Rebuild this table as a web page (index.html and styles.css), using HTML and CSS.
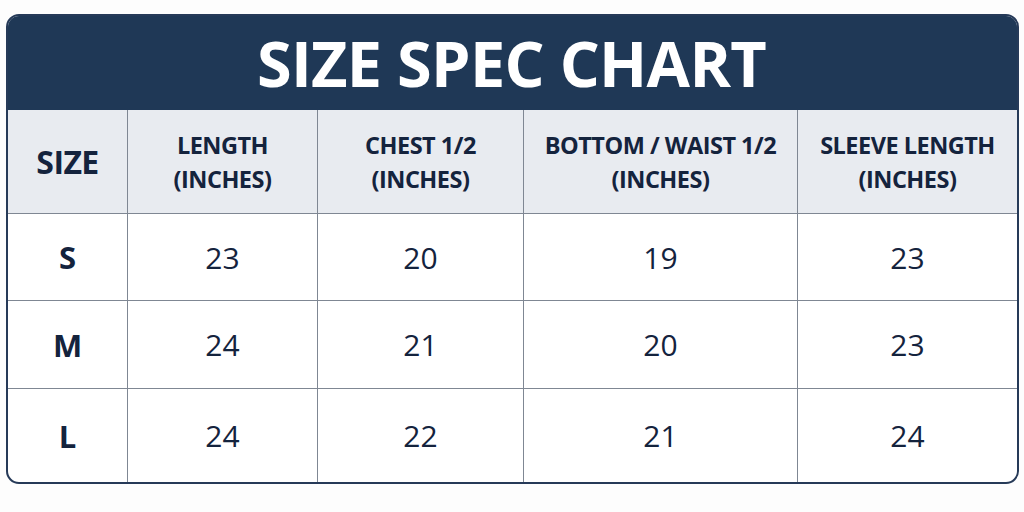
FILE: index.html
```html
<!DOCTYPE html>
<html>
<head>
<meta charset="utf-8">
<link rel="stylesheet" href="styles.css">
</head>
<body>
<div class="card">
  <div class="title">SIZE SPEC CHART</div>
  <div class="grid">
    <div class="cell head size">SIZE</div>
    <div class="cell head">LENGTH<br>(INCHES)</div>
    <div class="cell head">CHEST 1/2<br>(INCHES)</div>
    <div class="cell head">BOTTOM / WAIST 1/2<br>(INCHES)</div>
    <div class="cell head last">SLEEVE LENGTH<br>(INCHES)</div>

    <div class="cell label">S</div>
    <div class="cell num">23</div>
    <div class="cell num">20</div>
    <div class="cell num">19</div>
    <div class="cell num last">23</div>

    <div class="cell label">M</div>
    <div class="cell num">24</div>
    <div class="cell num">21</div>
    <div class="cell num">20</div>
    <div class="cell num last">23</div>

    <div class="cell label bottom">L</div>
    <div class="cell num bottom">24</div>
    <div class="cell num bottom">22</div>
    <div class="cell num bottom">21</div>
    <div class="cell num last bottom">24</div>
  </div>
</div>
</body>
</html>
```

FILE: styles.css
```css
html, body {
  margin: 0;
  padding: 0;
  background: #fdfdfd;
}
body {
  width: 1024px;
  height: 512px;
  font-family: "Open Sans", "Noto Sans", sans-serif;
  color: #14233d;
}
.card {
  margin: 14px 0 0 6px;
  width: 1013px;
  height: 470px;
  box-sizing: border-box;
  border: 2px solid #263a58;
  border-radius: 13px;
  overflow: hidden;
  background: #ffffff;
}
.title {
  height: 94px;
  background: #1f3856;
  color: #ffffff;
  font-weight: 700;
  font-size: 63px;
  line-height: 94px;
  text-align: center;
  letter-spacing: -0.7px;
  padding-right: 2px;
}
.grid {
  display: grid;
  grid-template-columns: 120px 190px 206px 274px 219px;
  grid-template-rows: 104px 87px 88px 93px;
}
.cell {
  display: flex;
  align-items: center;
  justify-content: center;
  text-align: center;
  border-right: 1px solid #7f8793;
  border-bottom: 1px solid #7f8793;
}
.cell.last { border-right: none; }
.cell.bottom { border-bottom: none; }
.head {
  background: #e8ebf0;
  font-weight: 700;
  font-size: 23.5px;
  line-height: 34px;
  letter-spacing: -0.5px;
}
.head.size {
  font-size: 32px;
  letter-spacing: -0.6px;
}
.label {
  font-weight: 700;
  font-size: 31px;
}
.num {
  font-weight: 400;
  font-size: 30px;
}
```
